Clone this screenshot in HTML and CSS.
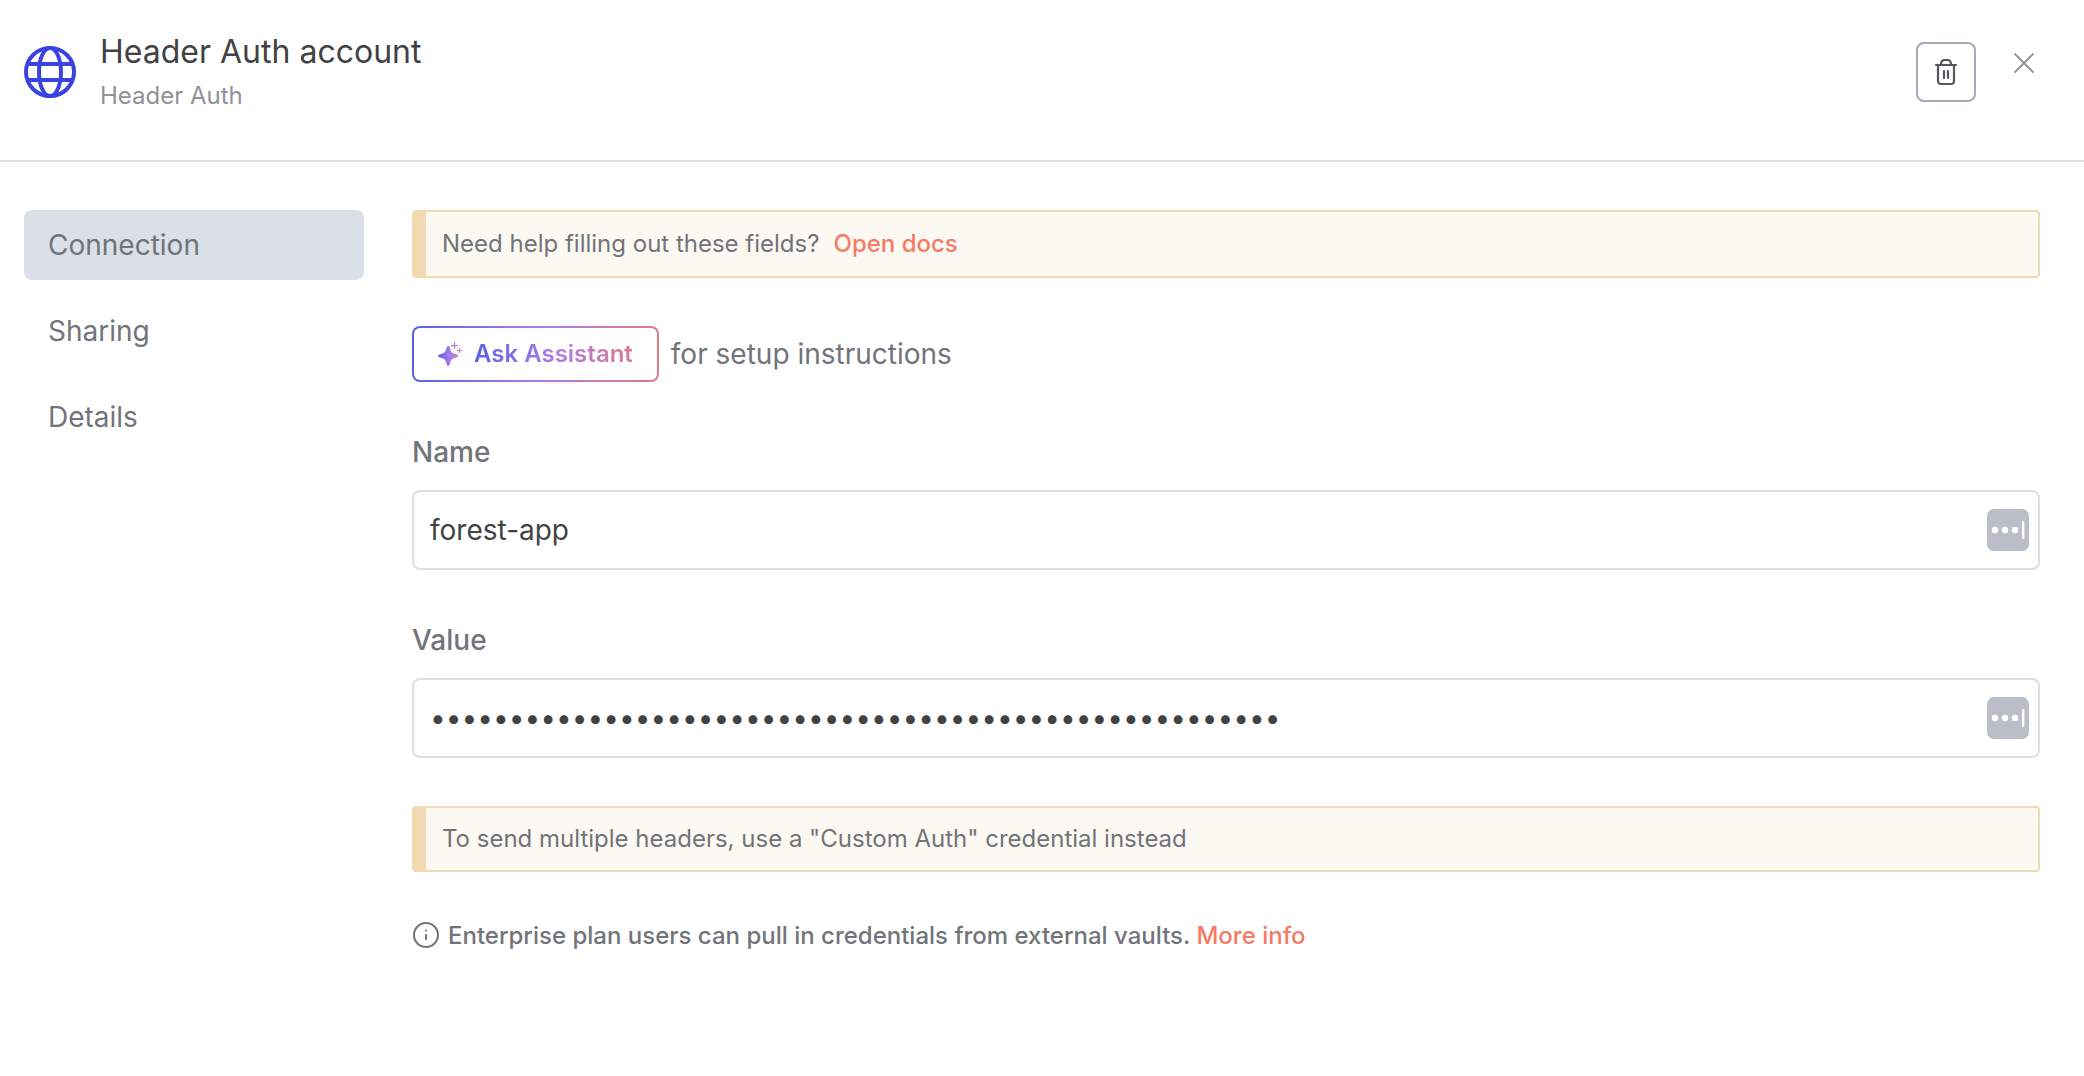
FILE: index.html
```html
<!DOCTYPE html>
<html lang="en">
<head>
<meta charset="utf-8">
<meta name="viewport" content="width=device-width, initial-scale=1">
<title>Header Auth account</title>
<link rel="stylesheet" href="styles.css">
</head>
<body>
<header class="header">
  <svg class="globe" viewBox="0 0 52 52" fill="none" stroke="currentColor" stroke-width="4" aria-hidden="true">
    <circle cx="26" cy="26" r="24"/>
    <ellipse cx="26" cy="26" rx="11" ry="24"/>
    <path d="M4 18H48M4 34H48"/>
  </svg>
  <div class="heading">
    <h1 class="title">Header Auth account</h1>
    <p class="subtitle">Header Auth</p>
  </div>
  <div class="actions">
    <button class="delete" type="button" aria-label="Delete">
      <svg width="24" height="28" viewBox="0 0 24 28" fill="none" stroke="currentColor" stroke-width="2.200" stroke-linecap="round" aria-hidden="true">
        <path d="M2 7H22M7 6.500C7 3.500 8.500 2 10.500 2H13.500C15.500 2 17 3.500 17 6.500M4 7V23C4 25 5 26 7 26H17C19 26 20 25 20 23V7M10 13V20M14 13V20"/>
      </svg>
    </button>
    <button class="close" type="button" aria-label="Close">
      <svg width="20" height="20" viewBox="0 0 20 20" fill="none" stroke="currentColor" stroke-width="1.800" stroke-linecap="round" aria-hidden="true">
        <path d="M1 1L19 19M19 1L1 19"/>
      </svg>
    </button>
  </div>
</header>
<div class="body">
  <nav class="menu">
    <a class="menu-item active" href="#connection" aria-current="page">Connection</a>
    <a class="menu-item" href="#sharing">Sharing</a>
    <a class="menu-item" href="#details">Details</a>
  </nav>
  <main class="content">
    <div class="callout docs"><span>Need help filling out these fields?</span><a class="link" href="#docs">Open docs</a></div>
    <div class="assistant">
      <button class="ask" type="button">
        <svg width="24" height="24" viewBox="0 0 24 24" aria-hidden="true">
          <defs><linearGradient id="spark" x1="0" y1="0" x2="1" y2="0"><stop offset="0" stop-color="#5b60e8"/><stop offset=".5" stop-color="#aa7bec"/><stop offset="1" stop-color="#d97f9d"/></linearGradient></defs>
          <path fill="url(#spark)" d="M9 4.800C9.500 3.600 11 3.600 11.500 4.800L13 9.200C13.300 10.100 13.900 10.700 14.800 11L19.300 12.700C20.500 13.200 20.500 14.600 19.300 15.100L14.800 16.800C13.900 17.100 13.300 17.700 13 18.600L11.500 23C11 24.200 9.500 24.200 9 23L7.400 18.600C7.100 17.700 6.500 17.100 5.600 16.800L1 15.100C-.2 14.600-.2 13.200 1 12.700L5.600 11C6.500 10.700 7.100 10.100 7.400 9.200ZM15.900 0H17.100V3H20V4.200H17.100V7H15.900V4.200H13V3H15.900ZM20.900 6H22.100V7.900H24V9.100H22.100V11H20.900V9.100H19V7.900H20.900Z"/>
        </svg>
        <span class="ask-text">Ask Assistant</span>
      </button>
      <span>for setup instructions</span>
    </div>
    <div class="field">
      <label for="name">Name</label>
      <div class="input-box">
        <input id="name" type="text" value="forest-app">
        <svg class="filler" viewBox="0 0 42 42" aria-hidden="true"><rect width="42" height="42" rx="7" fill="#babec8"/><g fill="#fff"><circle cx="8" cy="21" r="3.200"/><circle cx="18" cy="21" r="3.200"/><circle cx="28" cy="21" r="3.200"/><rect x="35" y="12" width="2.400" height="18" rx="1"/></g></svg>
      </div>
    </div>
    <div class="field">
      <label for="value">Value</label>
      <div class="input-box">
        <input id="value" type="password" value="012345678901234567890123456789012345678901234567890123">
        <svg class="filler" viewBox="0 0 42 42" aria-hidden="true"><rect width="42" height="42" rx="7" fill="#babec8"/><g fill="#fff"><circle cx="8" cy="21" r="3.200"/><circle cx="18" cy="21" r="3.200"/><circle cx="28" cy="21" r="3.200"/><rect x="35" y="12" width="2.400" height="18" rx="1"/></g></svg>
      </div>
    </div>
    <div class="callout">To send multiple headers, use a "Custom Auth" credential instead</div>
    <div class="note">
      <svg width="28" height="28" viewBox="0 0 28 28" fill="none" stroke="currentColor" stroke-width="2" stroke-linecap="round" aria-hidden="true"><circle cx="14" cy="13" r="12"/><path d="M14 13V17"/><path d="M14 8.500V8.600"/></svg>
      <p>Enterprise plan users can pull in credentials from external vaults. <a class="link" href="#more">More info</a></p>
    </div>
  </main>
</div>
</body>
</html>
```
FILE: styles.css
```css
* { box-sizing: border-box; }
body {
  margin: 0;
  background: #fff;
  color: #71747a;
  font-family: Inter, "Liberation Sans", sans-serif;
  font-size: 24px;
  line-height: 32px;
}
h1, p { margin: 0; }
svg { display: block; flex: none; }
button { padding: 0; background: none; border: 0; font: inherit; cursor: pointer; }
a { text-decoration: none; }

.header {
  display: flex;
  align-items: flex-start;
  padding: 32px 44px 48px 24px;
  border-bottom: 2px solid #dbdfe7;
}
.globe { width: 52px; height: 52px; margin-top: 14px; color: #3a42e0; }
.heading { flex: 1; margin-left: 24px; }
.title { font-size: 32px; font-weight: 400; line-height: 40px; color: #414244; }
.subtitle { margin-top: 8px; color: #909298; }
.actions { display: flex; align-items: flex-start; gap: 32px; padding-top: 10px; }
.delete {
  display: grid;
  place-items: center;
  width: 60px;
  height: 60px;
  border: 2px solid #a5a9b8;
  border-radius: 8px;
  color: #55575b;
}
.close { display: grid; place-items: center; width: 32px; height: 42px; color: #909298; }

.body { display: flex; gap: 48px; padding: 48px 44px 48px 24px; }
.menu { display: flex; flex-direction: column; gap: 16px; width: 340px; flex: none; font-size: 28px; }
.menu-item { padding: 19px 24px; border-radius: 8px; color: inherit; }
.active { background: #dbdfe7; }
.content { flex: 1; min-width: 0; }

.callout {
  padding: 15px 16px;
  background: #fcf9f2;
  border: 2px solid #f1d9b4;
  border-left-width: 14px;
  border-radius: 4px;
}
.docs { display: flex; gap: 14px; padding-block: 16px; }
.link { color: #f47b66; font-weight: 500; }
.assistant { display: flex; align-items: center; gap: 12px; margin-top: 48px; font-size: 28px; }
.ask {
  display: flex;
  align-items: center;
  gap: 12px;
  height: 56px;
  padding: 0 24px;
  border: 2px solid transparent;
  border-radius: 8px;
  background:
    linear-gradient(#fff, #fff) padding-box,
    linear-gradient(90deg, #5b60e8, #aa7bec 50%, #dc7b8b) border-box;
  font-size: 24px;
  font-weight: 600;
}
.ask-text {
  background: linear-gradient(90deg, #5b60e8, #aa7bec 50%, #dc7b8b);
  -webkit-background-clip: text;
  background-clip: text;
  color: transparent;
}
.field { margin-top: 48px; font-size: 28px; }
.field label { display: block; padding: 6px 0 22px; font-weight: 500; }
.input-box {
  display: flex;
  align-items: center;
  height: 80px;
  padding: 0 9px 0 16px;
  border: 2px solid #dbdfe7;
  border-radius: 8px;
}
.input-box:focus-within { border-color: #a5a9b8; }
.input-box input {
  flex: 1;
  min-width: 0;
  height: 100%;
  padding: 0;
  border: 0;
  outline: 0;
  background: none;
  color: #414244;
  font: inherit;
}
.filler { width: 42px; height: 42px; }
.field + .callout { margin-top: 48px; }
.note { display: flex; align-items: center; gap: 8px; margin-top: 48px; font-weight: 500; }
```
